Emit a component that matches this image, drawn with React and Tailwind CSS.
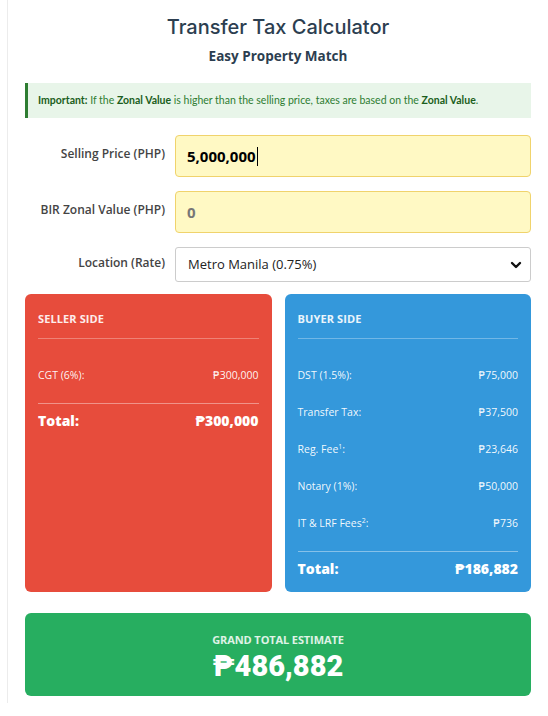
import React from "react";

const body = { fontFamily: '"Open Sans", "DejaVu Sans", sans-serif' };

const sellerRows = [{ label: "CGT (6%):", value: "₱300,000" }];

const buyerRows = [
  { label: "DST (1.5%):", value: "₱75,000" },
  { label: "Transfer Tax:", value: "₱37,500" },
  { label: "Reg. Fee", sup: "1", value: "₱23,646" },
  { label: "Notary (1%):", value: "₱50,000" },
  { label: "IT & LRF Fees", sup: "2", value: "₱736" },
];

function SideCard({ title, rows, total, bg }) {
  return (
    <div className={`${bg} rounded-[6px] pt-[18px] px-[13px] pb-[15px] text-white flex flex-col`}>
      <div className="text-[11px] leading-[14px] font-bold tracking-[0.01em] text-white/90 pb-[12px] border-b border-white/30">
        {title}
      </div>
      <div className="mt-[18px]">
        {rows.map((r) => (
          <div key={r.label} className="h-[37px] flex items-center justify-between text-[10.5px] font-normal text-white/95">
            <span>
              {r.label}
              {r.sup && <sup className="text-[7px]">{r.sup}</sup>}
              {r.sup && ":"}
            </span>
            <span>{r.value}</span>
          </div>
        ))}
      </div>
      <div className="mt-[9px] border-t border-white/40 pt-[9px] flex items-center justify-between text-[14px] leading-[16px] font-extrabold">
        <span>Total:</span>
        <span>{total}</span>
      </div>
    </div>
  );
}

function Field({ label, children }) {
  return (
    <div className="grid grid-cols-[140px_1fr] gap-[10px] items-center">
      <div className="text-right text-[12px] font-semibold text-[#444] -mt-[4px]">{label}</div>
      {children}
    </div>
  );
}

export default function App() {
  return (
    <div className="bg-white min-h-[716px] pl-[7px]" style={body}>
      <div className="border-l border-[#ececec] pl-[17px] pr-[17px] pb-[7px]">
        {/* Header */}
        <div className="pt-[14px] text-center">
          <h1
            className="text-[20px] leading-[26px] font-medium text-[#2c3e50]"
            style={{ fontFamily: 'Inter, "Open Sans", sans-serif' }}
          >
            Transfer Tax Calculator
          </h1>
          <div className="mt-[7px] text-[13.5px] leading-[18px] font-bold text-[#2c3e50]">Easy Property Match</div>
        </div>

        {/* Notice */}
        <div
          className="mt-[18px] h-[35px] flex items-center bg-[#e8f5e9] border-l-[3px] border-[#2e7d32] pl-[10px] text-[10.5px] text-[#2e7d32]"
          style={{ fontFamily: 'Lato, "Open Sans", sans-serif' }}
        >
          <span>
            <b className="font-bold text-[#1b5e20]">Important:</b> If the{" "}
            <b className="font-bold text-[#1b5e20]">Zonal Value</b> is higher than the selling price, taxes are based on the{" "}
            <b className="font-bold text-[#1b5e20]">Zonal Value</b>.
          </span>
        </div>

        {/* Inputs */}
        <div className="mt-[17px] flex flex-col gap-[14px]">
          <Field label="Selling Price (PHP)">
            <div className="h-[42px] flex items-center bg-[#fff9c4] border border-[#f0d36c] rounded-[4px] px-[11px] text-[15px] font-bold text-black">
              5,000,000
              <span className="ml-[1px] w-px h-[19px] bg-black" />
            </div>
          </Field>
          <Field label="BIR Zonal Value (PHP)">
            <div className="h-[42px] flex items-center bg-[#fff9c4] border border-[#f0d36c] rounded-[4px] px-[11px] text-[15px] font-bold text-[#777]">
              0
            </div>
          </Field>
          <Field label="Location (Rate)">
            <div className="h-[35px] flex items-center justify-between bg-white border border-[#ccc] rounded-[3px] pl-[12px] pr-[8px] text-[13px] text-[#222]">
              <span>Metro Manila (0.75%)</span>
              <svg width="12" height="8" viewBox="0 0 12 8" fill="none">
                <path d="M2 2l4 4 4-4" stroke="#111" strokeWidth="2.4" strokeLinecap="round" strokeLinejoin="round" />
              </svg>
            </div>
          </Field>
        </div>

        {/* Seller / Buyer */}
        <div className="mt-[12px] grid grid-cols-2 gap-[13px]">
          <SideCard title="SELLER SIDE" rows={sellerRows} total="₱300,000" bg="bg-[#e74c3c]" />
          <SideCard title="BUYER SIDE" rows={buyerRows} total="₱186,882" bg="bg-[#3498db]" />
        </div>

        {/* Grand total */}
        <div className="mt-[21px] h-[83px] pt-[6px] bg-[#27ae60] rounded-[6px] flex flex-col items-center justify-center text-white">
          <div className="text-[11px] leading-[14px] font-bold text-white/85 tracking-[-0.01em]">GRAND TOTAL ESTIMATE</div>
          <div
            className="mt-[3px] text-[29px] leading-[32px] font-black"
            style={{ fontFamily: 'Roboto, "DejaVu Sans", sans-serif' }}
          >
            ₱486,882
          </div>
        </div>
      </div>
    </div>
  );
}
